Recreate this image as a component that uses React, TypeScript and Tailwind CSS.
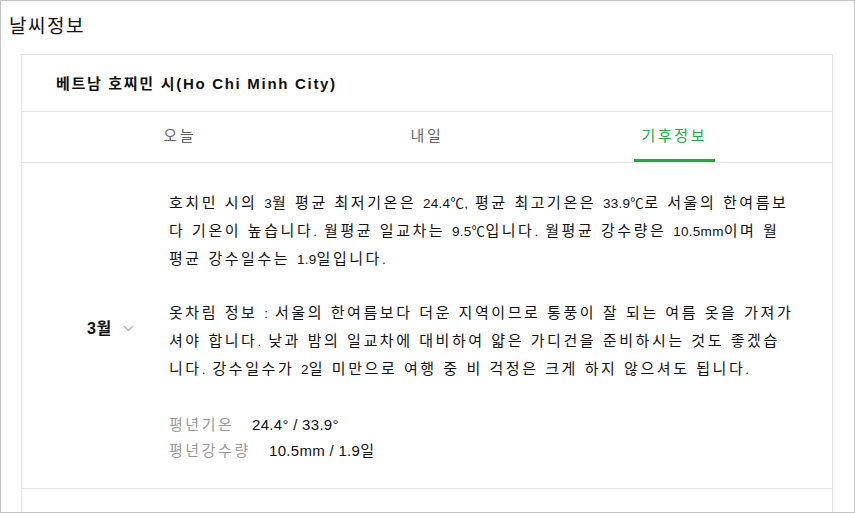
import React from "react";

const font = { fontFamily: '"Liberation Sans", "Noto Sans CJK KR", sans-serif' };

function L({ children }: { children: React.ReactNode }) {
  return <span className="text-[13.5px] leading-none tracking-[0.3px]">{children}</span>;
}

export default function App() {
  return (
    <div
      className="w-[855px] h-[513px] overflow-hidden border border-[#c4c4c4] bg-white text-[#111]"
      style={font}
    >
      <div className="pl-[8px] pt-[12px] h-[53px] text-[19px] leading-[28px] tracking-[1.5px] text-[#111]">날씨정보</div>
      <div className="ml-[20px] w-[812px] border border-[#e4e4e4]">
        <div className="h-[57px] border-b border-[#e4e4e4] pl-[34px] pt-[18px] text-[15px] font-bold leading-[22px] tracking-[1.7px] text-[#111]">
          베트남 호찌민 시(Ho Chi Minh City)
        </div>
        <div className="flex h-[51px] border-b border-[#e4e4e4] px-[34px]">
          {["오늘", "내일", "기후정보"].map((t, i) => (
            <div key={t} className="flex flex-1 justify-center">
              <div
                className={
                  "flex h-full items-center px-[8px] pt-[1px] text-[15px] tracking-[2.6px] " +
                  (i === 2
                    ? "border-b-[3px] border-[#1ea84a] text-[#1ea84a]"
                    : "border-b-[3px] border-transparent text-[#666]")
                }
              >
                {t}
              </div>
            </div>
          ))}
        </div>
        <div className="flex h-[326px] border-b border-[#e4e4e4]">
          <div className="flex w-[147px] items-center pl-[65px] pt-[6px]">
            <span className="text-[16px] font-bold tracking-[0.5px] text-[#111]">3월</span>
            <svg className="ml-[11px]" width="11" height="7" viewBox="0 0 11 7">
              <path d="M1 1 L5.5 5.5 L10 1" fill="none" stroke="#b5b5b5" strokeWidth="1.4" />
            </svg>
          </div>
          <div className="pt-[26px] text-[15px] tracking-[2.55px] text-[#111]">
            <p className="leading-[28px] whitespace-nowrap">
              호치민 시의 <L>3</L>월 평균 최저기온은 <L>24.4℃,</L> 평균 최고기온은 <L>33.9℃</L>로 서울의 한여름보
              <br />
              다 기온이 높습니다<L>.</L> 월평균 일교차는 <L>9.5℃</L>입니다<L>.</L> 월평균 강수량은 <L>10.5mm</L>이며 월
              <br />
              평균 강수일수는 <L>1.9</L>일입니다<L>.</L>
            </p>
            <p className="mt-[26px] leading-[28px] whitespace-nowrap">
              옷차림 정보 <L>:</L> 서울의 한여름보다 더운 지역이므로 통풍이 잘 되는 여름 옷을 가져가
              <br />
              셔야 합니다<L>.</L> 낮과 밤의 일교차에 대비하여 얇은 가디건을 준비하시는 것도 좋겠습
              <br />
              니다<L>.</L> 강수일수가 <L>2</L>일 미만으로 여행 중 비 걱정은 크게 하지 않으셔도 됩니다<L>.</L>
            </p>
            <div className="mt-[29px] leading-[26px]">
              <div className="flex">
                <span className="w-[83px] text-[#999]">평년기온</span>
                <span className="tracking-[0.3px]">24.4° / 33.9°</span>
              </div>
              <div className="flex">
                <span className="w-[100px] text-[#999]">평년강수량</span>
                <span className="tracking-[0.3px]">10.5mm / 1.9일</span>
              </div>
            </div>
          </div>
        </div>
        <div className="h-[40px]" />
      </div>
    </div>
  );
}
